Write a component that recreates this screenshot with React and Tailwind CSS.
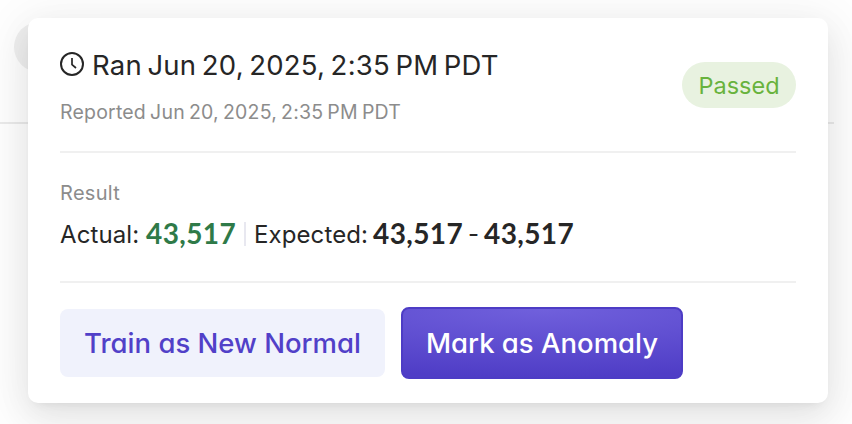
import React from "react";

const run = {
  ranAt: "Jun 20, 2025, 2:35 PM PDT",
  reportedAt: "Jun 20, 2025, 2:35 PM PDT",
  status: "Passed",
  actual: "43,517",
  expected: ["43,517", "43,517"],
};

function ClockIcon() {
  return (
    <svg
      width="24"
      height="24"
      viewBox="0 0 24 24"
      fill="none"
      stroke="currentColor"
      strokeWidth="2"
      className="shrink-0"
    >
      <circle cx="12" cy="12" r="11" />
      <path d="M12 6v6.6l4 3.4" strokeWidth="1.7" />
    </svg>
  );
}

export default function App() {
  return (
    <div className="relative h-[424px] w-[852px] overflow-hidden bg-white px-[28px] pt-[18px] font-['Inter',sans-serif] text-[#262626]">
      {/* Page behind the popover */}
      <div className="absolute left-[14px] top-[22px] h-[50px] w-[50px] rounded-full bg-[#f0f0f0]" />
      <div className="absolute left-0 top-[122px] h-[2px] w-[834px] bg-[#ebebeb]" />

      <div className="relative h-[385px] w-[800px] rounded-[10px] bg-white px-8 shadow-[0_12px_32px_rgba(0,0,0,0.08),0_6px_12px_-8px_rgba(0,0,0,0.12),0_9px_56px_16px_rgba(0,0,0,0.05)]">
        {/* Header Section */}
        <div className="flex h-[135px] items-center justify-between border-b-2 border-[#f0f0f0]">
          <div className="pt-[2px]">
            <div className="flex h-[39px] items-center gap-2">
              <ClockIcon />
              <span className="whitespace-nowrap pt-[4px] text-[27.5px] tracking-[0.27px] [word-spacing:-2.7px]">Ran {run.ranAt}</span>
            </div>
            <div className="mt-[14px] whitespace-nowrap text-[19.5px] leading-[30px] tracking-[0.2px] [word-spacing:-1.6px] text-[#8c8c8c]">
              Reported {run.reportedAt}
            </div>
          </div>
          <span className="flex h-[46px] w-[114px] items-center justify-center rounded-full bg-[#e8f2e0] pt-[2px] text-[23.5px] text-[#68b33d]">
            {run.status}
          </span>
        </div>

        {/* Result Section */}
        <div className="h-[130px] border-b-2 border-[#f0f0f0] pt-[25px]">
          <div className="text-[20px] leading-[30px] tracking-[0.3px] text-[#8c8c8c]">Result</div>
          <div className="mt-[6px] flex h-10 items-center whitespace-nowrap text-[24px]">
            <span className="w-[86px] pt-[2px] tracking-[0.1px]">Actual:</span>
            <span className="w-[90px] pb-[2px] font-['Lato',sans-serif] text-[28px] font-bold tracking-[0.4px] text-[#2f7a48]">
              {run.actual}
            </span>
            <span className="mx-2 h-6 w-[2px] bg-[#e8e8f0]" />
            <span className="w-[119px] pt-[2px] tracking-[0.1px]">Expected:</span>
            <span className="w-[90px] pb-[2px] font-['Lato',sans-serif] text-[28px] font-bold tracking-[0.4px]">{run.expected[0]}</span>
            <span className="w-[21px] text-center">-</span>
            <span className="pb-[2px] font-['Lato',sans-serif] text-[28px] font-bold tracking-[0.4px]">{run.expected[1]}</span>
          </div>
        </div>

        {/* Actions */}
        <div className="flex items-center gap-4 pt-6 text-[27.5px] font-[450] [font-feature-settings:'cv11']">
          <button className="h-[68px] w-[325px] whitespace-nowrap rounded-lg bg-[#f0f2fc] pt-[2px] text-[#5140c8]">
            Train as New Normal
          </button>
          <button className="h-[72px] w-[282px] whitespace-nowrap rounded-lg border-2 border-[#4d3cc5] bg-[radial-gradient(150%_100%_at_50%_0%,#7060dc_0%,#4f3dc6_100%)] pt-[2px] text-white">
            Mark as Anomaly
          </button>
        </div>
      </div>
    </div>
  );
}
